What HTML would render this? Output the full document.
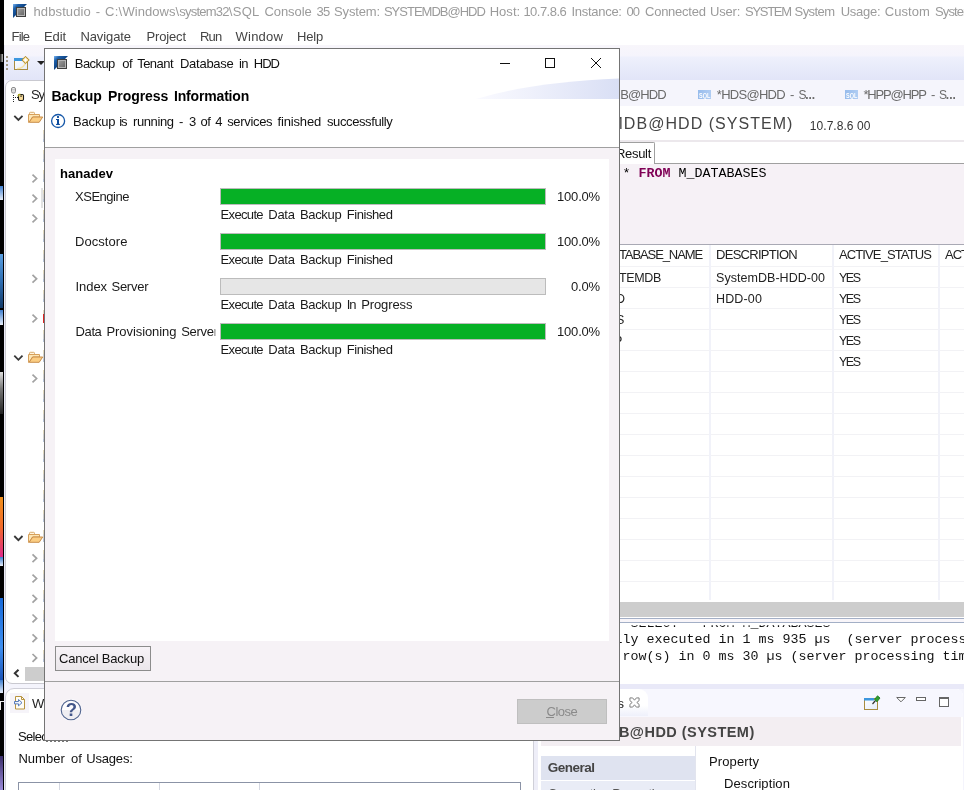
<!DOCTYPE html>
<html lang="en"><head><meta charset="utf-8"><title>hdbstudio</title>
<style>
html,body{margin:0;padding:0;}
body{width:964px;height:790px;position:relative;overflow:hidden;background:#fff;font-family:"Liberation Sans",sans-serif;}
.t{position:absolute;white-space:pre;}
.b{position:absolute;box-sizing:border-box;}
svg{position:absolute;overflow:visible;}
#root{position:absolute;left:0;top:0;width:964px;height:790px;overflow:hidden;will-change:transform;}

</style></head>
<body>
<div id="root">
<!-- ===== main window chrome ===== -->
<div class="b" style="left:0;top:0;width:964px;height:45px;background:#fff"></div>
<div class="b" style="left:0;top:45px;width:964px;height:35px;background:linear-gradient(#f8f6fb 0,#f5f4fc 11px,#eef0fc 12px,#e2e5f8 34px,#e2e5f8 35px)"></div>
<div class="b" style="left:0;top:80px;width:964px;height:710px;background:#f4f4fc"></div>

<!-- app icon -->
<svg style="left:13px;top:4px" width="14" height="14" viewBox="0 0 14 14"><defs><linearGradient id="ig" x1="0" y1="0" x2="0.6" y2="0.6"><stop offset="0" stop-color="#7db6f2"/><stop offset="0.35" stop-color="#1d5fa8"/><stop offset="1" stop-color="#083a78"/></linearGradient><linearGradient id="sg" x1="0" y1="0" x2="1" y2="1"><stop offset="0" stop-color="#9a9a9a"/><stop offset="1" stop-color="#6a6a6a"/></linearGradient></defs><polygon points="0,0 14,0 0,14" fill="url(#ig)"/><rect x="3" y="3" width="10" height="10" fill="#3e3e3e"/><rect x="4" y="4" width="8" height="8" fill="#b4b4b4"/><rect x="5" y="5" width="6" height="6" fill="url(#sg)"/></svg>

<!-- toolbar bits -->
<div class="b" style="left:6px;top:56px;width:2px;height:16px;background:repeating-linear-gradient(#a39a86 0,#a39a86 2px,transparent 2px,transparent 4px)"></div>
<svg style="left:14px;top:56px" width="16" height="15" viewBox="0 0 16 15"><defs><linearGradient id="nw" x1="0" y1="0" x2="1" y2="1"><stop offset="0" stop-color="#fff"/><stop offset="1" stop-color="#e4ecfc"/></linearGradient></defs><rect x="0.500" y="2.500" width="13" height="11" fill="url(#nw)" stroke="#a88c40"/><rect x="0" y="2" width="9" height="3" fill="#3d97de"/><path d="M3 12.700 Q9.500 12.500 11.300 7" stroke="#f6e2a4" stroke-width="1.300" fill="none"/><path d="M11.500 0.300 L15.200 4 L11.500 7.700 L7.800 4 Z" fill="#f1d68a" stroke="#b08a2c" stroke-width="1"/><path d="M11.500 2.200v3.600M9.700 4h3.600" stroke="#fff" stroke-width="1.300"/></svg>
<svg style="left:37px;top:61px" width="8" height="4" viewBox="0 0 8 4"><polygon points="0,0 8,0 4,4" fill="#222"/></svg>

<!-- ===== left Systems panel ===== -->
<div class="b" style="left:5px;top:80px;width:60px;height:604px;background:#fff;border:1px solid #c9c9d0;border-radius:7px 0 0 7px"></div>
<!-- systems icon -->
<svg style="left:10px;top:87px" width="15" height="15" viewBox="0 0 15 15"><rect x="1.500" y="0.500" width="4" height="5.500" rx="1.500" fill="#f0f0f0" stroke="#8a8a8a"/><path d="M2 2.500h3M2 4h3" stroke="#b5b5b5" stroke-width="0.700"/><path d="M3.500 8v7" stroke="#222" stroke-width="1" stroke-dasharray="1 1" fill="none"/><path d="M5 10.500h3" stroke="#222" stroke-width="1" stroke-dasharray="1 1" fill="none"/><rect x="8.500" y="7.500" width="5" height="6" rx="1.200" fill="#f9dc9a" stroke="#1a1a1a" stroke-width="1.100"/><path d="M8.300 9.500v-1.200q0-1 1.200-1h1" stroke="#a6a418" stroke-width="1.200" fill="none"/><rect x="10.300" y="8.500" width="1.500" height="1.200" fill="#1a1a1a"/></svg>
<!-- chevrons + folders -->
<svg style="left:0;top:0" width="50" height="700" viewBox="0 0 50 700" fill="none">
 <g stroke="#383838" stroke-width="1.800">
  <path d="M14.300 115.800 L18.400 120 L22.500 115.800"/><path d="M14.300 355.600 L18.400 359.800 L22.500 355.600"/><path d="M14.300 536 L18.400 540.200 L22.500 536"/>
 </g>
 <g stroke="#a2a2a2" stroke-width="1.700">
  <path d="M32.500 174.6 L36.600 178.5 L32.500 182.4"/><path d="M32.500 194.7 L36.600 198.6 L32.500 202.5"/><path d="M32.500 214.6 L36.600 218.5 L32.500 222.4"/><path d="M32.500 274.9 L36.600 278.8 L32.500 282.7"/><path d="M32.500 314.6 L36.600 318.5 L32.500 322.4"/><path d="M32.500 374.6 L36.600 378.5 L32.500 382.4"/><path d="M32.500 554.4 L36.600 558.3 L32.500 562.2"/><path d="M32.500 574.6 L36.600 578.5 L32.500 582.4"/><path d="M32.500 594.8 L36.600 598.7 L32.500 602.6"/><path d="M32.500 614.5 L36.600 618.4 L32.500 622.3"/><path d="M32.500 634.3 L36.600 638.2 L32.500 642.1"/><path d="M32.500 654.0 L36.600 657.9 L32.500 661.8"/>
 </g>
 <g id="fold">
  <path d="M29.500 114.500 v-1.300 q0 -0.900 0.900 -0.900 h3.200 q0.900 0 0.900 0.900 v1.300" fill="#fff6e2" stroke="#d9ab6c"/>
  <path d="M28.500 114.500 h11 v2.500 h-7 l-3.500 5.300 h-0.500z" fill="#fde6b6" stroke="#d6a05c"/>
  <path d="M29.200 122.300 l3.500 -5.300 h10 l-3.500 5.300z" fill="#fbcd82" stroke="#c98e4a"/>
 </g>
 <use href="#fold" y="240"/><use href="#fold" y="420"/>
 <path d="M18.500 669.700 L14.800 673.300 L18.500 676.900" stroke="#333" stroke-width="2"/>
</svg>
<div class="b" style="left:25px;top:667px;width:30px;height:14px;background:#cdcdcd"></div>
<!-- hidden icon slivers next to dialog -->
<div class="b" style="left:43px;top:130px;width:1px;height:532px;opacity:.55;background:repeating-linear-gradient(#cdbd8c 0,#c4b68e 4px,#a9a9a9 4px,#a9a9a9 9px,#8094b8 9px,#8094b8 12px,transparent 12px,transparent 20px)"></div>
<div class="b" style="left:41px;top:188px;width:2px;height:20px;background:#e2e2e2"></div>
<div class="b" style="left:43px;top:314px;width:1px;height:9px;background:#d22"></div>

<!-- ===== bottom-left panel ===== -->
<div class="b" style="left:5px;top:688px;width:529px;height:110px;background:#fff;border:1px solid #cfcfd8;border-radius:9px 0 0 0"></div>
<div class="b" style="left:10px;top:693px;width:19px;height:20px;background:#f6f4f9"></div>
<svg style="left:14px;top:696px" width="12" height="14" viewBox="0 0 12 14"><path d="M1.500 0.500h6l3 3v9.500h-9z" fill="#fffdf6" stroke="#b89440"/><path d="M7.500 0.500v3h3" fill="none" stroke="#b89440"/><path d="M0.500 5.500h4v-2l3.500 3.200-3.500 3.200v-2h-4z" fill="#eef3fc" stroke="#4a6fb5" stroke-width="0.900"/></svg>
<div class="b" style="left:18px;top:782px;width:503px;height:20px;border:1px solid #8b93a6;background:#fff"></div>
<div class="b" style="left:59px;top:783px;width:1px;height:10px;background:#d5d8e2"></div>
<div class="b" style="left:159px;top:783px;width:1px;height:10px;background:#d5d8e2"></div>
<div class="b" style="left:259px;top:783px;width:1px;height:10px;background:#d5d8e2"></div>

<div class="b" style="left:46px;top:741px;width:24px;height:1px;background:repeating-linear-gradient(90deg,#777 0,#777 2px,transparent 2px,transparent 4px)"></div>

<!-- left black desktop strip -->
<div class="b" style="left:4px;top:45px;width:1px;height:745px;background:#ebebf8"></div>
<div class="b" style="left:0;top:0;width:4px;height:790px;background:#000"></div>
<div class="b" style="left:0;top:54px;width:3px;height:8px;background:linear-gradient(90deg,#111,#bbb)"></div>
<div class="b" style="left:0;top:186px;width:3px;height:14px;background:linear-gradient(#3f7fd0,#e8eef8)"></div>
<div class="b" style="left:0;top:254px;width:3px;height:54px;background:linear-gradient(#5a9ee0,#2f6fb4 50%,#123a68)"></div>
<div class="b" style="left:0;top:310px;width:3px;height:15px;background:linear-gradient(#3f7fd0,#e8eef8)"></div>
<div class="b" style="left:0;top:372px;width:3px;height:42px;background:linear-gradient(#ddd,#777 40%,#222)"></div>
<div class="b" style="left:0;top:497px;width:3px;height:60px;background:linear-gradient(#f0901c,#f26a2a 50%,#e02a8a)"></div>
<div class="b" style="left:0;top:557px;width:3px;height:9px;background:linear-gradient(#3f7fd0,#e8eef8)"></div>
<div class="b" style="left:0;top:598px;width:3px;height:82px;background:linear-gradient(#1668d8,#3f8ff0 60%,#1b54b8)"></div>
<div class="b" style="left:0;top:680px;width:3px;height:13px;background:linear-gradient(#3f7fd0,#e8eef8)"></div>
<div class="b" style="left:0;top:701px;width:4px;height:9px;border-left:1px solid #eee;border-top:1px solid #eee"></div>
<div class="b" style="left:0;top:756px;width:3px;height:34px;background:linear-gradient(#3a2d6a,#9a8ad8)"></div>

<!-- ===== editor area (right) ===== -->
<div class="b" style="left:600px;top:80px;width:364px;height:26px;background:#f5f5fc"></div>
<div class="b" style="left:600px;top:106px;width:364px;height:57px;background:#fff"></div>
<div class="b" style="left:600px;top:140px;width:364px;height:2px;background:#ece8ec"></div>
<!-- sql icons -->
<div class="b" style="left:698px;top:90px;width:13px;height:9px;background:linear-gradient(90deg,#97bcec,#b0cdf3)"></div>
<div class="b" style="left:845px;top:90px;width:13px;height:9px;background:linear-gradient(90deg,#97bcec,#b0cdf3)"></div>
<!-- Result tab -->
<div class="b" style="left:600px;top:163px;width:364px;height:81px;background:#f6f1f6;border-top:1px solid #a0a0a0"></div>
<div class="b" style="left:600px;top:142px;width:55px;height:22px;background:#fff;border:1px solid #a0a0a0;border-bottom:none;border-radius:0 2px 0 0"></div>
<!-- result table -->
<div class="b" style="left:600px;top:244px;width:364px;height:358px;background:#fff;border-top:1px solid #a9a9b4"></div>
<div class="b" style="left:600px;top:246px;width:364px;height:356px;background:repeating-linear-gradient(#fff 0,#fff 20px,#f2f2f5 20px,#f2f2f5 21px)"></div>
<div class="b" style="left:600px;top:245px;width:364px;height:21px;background:#fff"></div>
<div class="b" style="left:709px;top:245px;width:2px;height:355px;background:#f1f2f9"></div>
<div class="b" style="left:832px;top:245px;width:2px;height:355px;background:#f1f2f9"></div>
<div class="b" style="left:938px;top:245px;width:2px;height:355px;background:#f1f2f9"></div>
<div class="b" style="left:600px;top:602px;width:364px;height:15px;background:#cdcdcd"></div>
<div class="b" style="left:600px;top:617px;width:364px;height:6px;background:linear-gradient(#fff 0,#fff 1px,#a3afc6 1px,#a3afc6 2px,#f8f5f9 2px,#f8f5f9 5px,#a3afc6 5px,#a3afc6 6px)"></div>
<!-- console -->
<div class="b" style="left:600px;top:623px;width:364px;height:61px;background:#fff"></div>
<div class="b" style="left:534px;top:684px;width:430px;height:5px;background:#e9e9f8"></div>

<!-- ===== properties panel ===== -->
<div class="b" style="left:534px;top:684px;width:4px;height:106px;background:#eeeef8"></div>
<div class="b" style="left:538px;top:689px;width:425px;height:101px;background:#fff;border-radius:0 7px 0 0"></div>
<div class="b" style="left:538px;top:689px;width:425px;height:28px;background:#f7f7fe;border-radius:0 7px 0 0"></div>
<div class="b" style="left:538px;top:689px;width:110px;height:27px;background:linear-gradient(#fff,#fff 60%,#eef0fb);border-radius:0 9px 0 0"></div>
<div class="b" style="left:541px;top:717px;width:420px;height:29px;background:#f3eef2"></div>
<div class="b" style="left:541px;top:756px;width:154px;height:24px;background:#dfe3f0"></div>
<div class="b" style="left:541px;top:781px;width:154px;height:12px;background:#e9ecf6"></div>
<div class="b" style="left:695px;top:746px;width:1px;height:44px;background:#e2e4ee"></div>
<!-- properties toolbar icons -->
<svg style="left:864px;top:695px" width="17" height="16" viewBox="0 0 17 16"><rect x="0.500" y="3.500" width="13" height="11" fill="url(#nw)" stroke="#a88c40"/><rect x="0" y="3" width="10" height="2.500" fill="#3d97de"/><path d="M8.500 9 L11.500 5.500" stroke="#333" stroke-width="1.200"/><path d="M10.500 4.500 L13.500 0.800 L16 3 L13 6.800z" fill="#2fa02f" stroke="#1b741b" stroke-width="0.800"/></svg>
<svg style="left:896px;top:697px" width="10" height="6" viewBox="0 0 10 6"><path d="M0.700 0.500h8.600l-4.300 4.300z" fill="#fff" stroke="#666" stroke-width="1"/></svg>
<div class="b" style="left:916px;top:697px;width:10px;height:4px;border:1px solid #666;background:#fff"></div>
<div class="b" style="left:939px;top:697px;width:10px;height:10px;border:1px solid #666;border-top-width:2px;background:#fff"></div>
<svg style="left:629px;top:697px" width="11" height="11" viewBox="0 0 12 12"><path d="M1 1h3l2 2.500 2-2.500h3v3l-2.500 2 2.500 2v3h-3l-2-2.500-2 2.500h-3v-3l2.500-2-2.500-2z" fill="#fff" stroke="#777" stroke-width="1"/></svg>

<span class="t" style="left:33.5px;top:3.00px;font-size:13px;line-height:17px;color:#9b9b9b;letter-spacing:0.112px;">hdbstudio</span>
<span class="t" style="left:95.7px;top:3.00px;font-size:13px;line-height:17px;color:#9b9b9b;letter-spacing:0.156px;">-</span>
<span class="t" style="left:105.1px;top:3.00px;font-size:13px;line-height:17px;color:#9b9b9b;letter-spacing:0.225px;">C:\</span>
<span class="t" style="left:122.4px;top:3.00px;font-size:13px;line-height:17px;color:#9b9b9b;letter-spacing:0.068px;">Windows\</span>
<span class="t" style="left:179.3px;top:3.00px;font-size:13px;line-height:17px;color:#9b9b9b;letter-spacing:-0.768px;">system32</span>
<span class="t" style="left:228.8px;top:3.00px;font-size:13px;line-height:17px;color:#9b9b9b;letter-spacing:0.294px;">\SQL</span>
<span class="t" style="left:264.4px;top:3.00px;font-size:13px;line-height:17px;color:#9b9b9b;letter-spacing:-0.058px;">Console</span>
<span class="t" style="left:316.6px;top:3.00px;font-size:13px;line-height:17px;color:#9b9b9b;letter-spacing:-0.934px;">35</span>
<span class="t" style="left:334.1px;top:3.00px;font-size:13px;line-height:17px;color:#9b9b9b;letter-spacing:-0.153px;">System:</span>
<span class="t" style="left:383.9px;top:3.00px;font-size:13px;line-height:17px;color:#9b9b9b;letter-spacing:-0.990px;">SYSTEMDB@HDD</span>
<span class="t" style="left:489.7px;top:3.00px;font-size:13px;line-height:17px;color:#9b9b9b;letter-spacing:0.031px;">Host:</span>
<span class="t" style="left:523.4px;top:3.00px;font-size:13px;line-height:17px;color:#9b9b9b;letter-spacing:-0.525px;">10.7.8.6</span>
<span class="t" style="left:571.4px;top:3.00px;font-size:13px;line-height:17px;color:#9b9b9b;letter-spacing:-0.274px;">Instance:</span>
<span class="t" style="left:626.6px;top:3.00px;font-size:13px;line-height:17px;color:#9b9b9b;letter-spacing:-1.034px;">00</span>
<span class="t" style="left:645px;top:3.00px;font-size:13px;line-height:17px;color:#9b9b9b;letter-spacing:-0.243px;">Connected</span>
<span class="t" style="left:710px;top:3.00px;font-size:13px;line-height:17px;color:#9b9b9b;letter-spacing:-0.172px;">User:</span>
<span class="t" style="left:745px;top:3.00px;font-size:13px;line-height:17px;color:#9b9b9b;letter-spacing:-1.278px;">SYSTEM</span>
<span class="t" style="left:794.6px;top:3.00px;font-size:13px;line-height:17px;color:#9b9b9b;letter-spacing:-0.574px;">System</span>
<span class="t" style="left:840.7px;top:3.00px;font-size:13px;line-height:17px;color:#9b9b9b;letter-spacing:-0.234px;">Usage:</span>
<span class="t" style="left:884.7px;top:3.00px;font-size:13px;line-height:17px;color:#9b9b9b;letter-spacing:0.084px;">Custom</span>
<span class="t" style="left:935px;top:3.00px;font-size:13px;line-height:17px;color:#9b9b9b;letter-spacing:-0.891px;">System</span>
<span class="t" style="left:11.5px;top:28.00px;font-size:13px;line-height:17px;color:#444;letter-spacing:-0.788px;">File</span>
<span class="t" style="left:44px;top:28.00px;font-size:13px;line-height:17px;color:#444;letter-spacing:-0.102px;">Edit</span>
<span class="t" style="left:80.4px;top:28.00px;font-size:13px;line-height:17px;color:#444;letter-spacing:-0.089px;">Navigate</span>
<span class="t" style="left:146.4px;top:28.00px;font-size:13px;line-height:17px;color:#444;letter-spacing:-0.124px;">Project</span>
<span class="t" style="left:200px;top:28.00px;font-size:13px;line-height:17px;color:#444;letter-spacing:-0.786px;">Run</span>
<span class="t" style="left:235.6px;top:28.00px;font-size:13px;line-height:17px;color:#444;letter-spacing:0.192px;">Window</span>
<span class="t" style="left:297px;top:28.00px;font-size:13px;line-height:17px;color:#444;letter-spacing:-0.188px;">Help</span>
<span class="t" style="left:31px;top:86.00px;font-size:13px;line-height:17px;color:#222;letter-spacing:-1.086px;">Sy</span>
<span class="t" style="left:32px;top:695.00px;font-size:13px;line-height:17px;color:#222;letter-spacing:-0.281px;">W</span>
<span class="t" style="left:18px;top:728.00px;font-size:13px;line-height:17px;color:#111;letter-spacing:-0.689px;">Selected:</span>
<span class="t" style="left:18.4px;top:750.00px;font-size:13px;line-height:17px;color:#111;letter-spacing:0.025px;">Number</span>
<span class="t" style="left:71px;top:750.00px;font-size:13px;line-height:17px;color:#111;letter-spacing:0.028px;">of</span>
<span class="t" style="left:86.3px;top:750.00px;font-size:13px;line-height:17px;color:#111;letter-spacing:-0.200px;">Usages:</span>
<span class="t" style="left:620.2px;top:86.00px;font-size:13px;line-height:17px;color:#6a6a6a;letter-spacing:-0.889px;">B@HDD</span>
<span class="t" style="left:699.3px;top:89.57px;font-size:7px;line-height:11px;color:#fff;font-weight:bold;transform:scaleX(0.78);transform-origin:0 50%;">SQL</span>
<span class="t" style="left:716.8px;top:86.00px;font-size:13px;line-height:17px;color:#6a6a6a;letter-spacing:-0.722px;">*HDS@HDD</span>
<span class="t" style="left:790px;top:86.00px;font-size:13px;line-height:17px;color:#6a6a6a;letter-spacing:0.156px;">-</span>
<span class="t" style="left:798.4px;top:86.84px;font-size:12px;line-height:16px;color:#6a6a6a;">S</span>
<span class="t" style="left:805.2px;top:86.84px;font-size:12px;line-height:16px;color:#6a6a6a;font-weight:bold;">...</span>
<span class="t" style="left:846.3px;top:89.57px;font-size:7px;line-height:11px;color:#fff;font-weight:bold;transform:scaleX(0.78);transform-origin:0 50%;">SQL</span>
<span class="t" style="left:863.5px;top:86.00px;font-size:13px;line-height:17px;color:#6a6a6a;letter-spacing:-1.190px;">*HPP@HPP</span>
<span class="t" style="left:931px;top:86.00px;font-size:13px;line-height:17px;color:#6a6a6a;letter-spacing:0.156px;">-</span>
<span class="t" style="left:939px;top:86.84px;font-size:12px;line-height:16px;color:#6a6a6a;">S</span>
<span class="t" style="left:945.8px;top:86.84px;font-size:12px;line-height:16px;color:#6a6a6a;font-weight:bold;">...</span>
<span class="t" style="left:609.5px;top:114.46px;font-size:16px;line-height:20px;color:#444;letter-spacing:1.040px;">MDB@HDD (SYSTEM)</span>
<span class="t" style="left:809.8px;top:117.84px;font-size:12px;line-height:16px;color:#333;letter-spacing:0.049px;">10.7.8.6 00</span>
<span class="t" style="left:616px;top:145.00px;font-size:13px;line-height:17px;color:#111;letter-spacing:-0.310px;">Result</span>
<span class="t" style="left:622.5px;top:164.78px;font-size:13.33px;line-height:17.33px;color:#000;font-family:'Liberation Mono', monospace;letter-spacing:0.001px;">* <b style="color:#7f0055">FROM</b> M_DATABASES</span>
<span class="t" style="left:619px;top:246.00px;font-size:13px;line-height:17px;color:#222;letter-spacing:-1.102px;">TABASE_NAME</span>
<span class="t" style="left:716px;top:246.00px;font-size:13px;line-height:17px;color:#222;letter-spacing:-0.713px;">DESCRIPTION</span>
<span class="t" style="left:839px;top:246.00px;font-size:13px;line-height:17px;color:#222;letter-spacing:-0.888px;">ACTIVE_STATUS</span>
<span class="t" style="left:945px;top:246.00px;font-size:13px;line-height:17px;color:#222;letter-spacing:-1.000px;">ACT</span>
<span class="t" style="left:619px;top:270.42px;font-size:12.5px;line-height:16.5px;color:#222;letter-spacing:-0.350px;">TEMDB</span>
<span class="t" style="left:716px;top:270.42px;font-size:12.5px;line-height:16.5px;color:#222;letter-spacing:0.043px;">SystemDB-HDD-00</span>
<span class="t" style="left:839px;top:270.42px;font-size:12.5px;line-height:16.5px;color:#222;letter-spacing:-1.472px;">YES</span>
<span class="t" style="left:616px;top:291.42px;font-size:12.5px;line-height:16.5px;color:#222;letter-spacing:-1.031px;">D</span>
<span class="t" style="left:716px;top:291.42px;font-size:12.5px;line-height:16.5px;color:#222;letter-spacing:0.141px;">HDD-00</span>
<span class="t" style="left:839px;top:291.42px;font-size:12.5px;line-height:16.5px;color:#222;letter-spacing:-1.472px;">YES</span>
<span class="t" style="left:616px;top:312.42px;font-size:12.5px;line-height:16.5px;color:#222;letter-spacing:-1.344px;">S</span>
<span class="t" style="left:839px;top:312.42px;font-size:12.5px;line-height:16.5px;color:#222;letter-spacing:-1.472px;">YES</span>
<span class="t" style="left:614px;top:333.42px;font-size:12.5px;line-height:16.5px;color:#222;letter-spacing:-0.344px;">P</span>
<span class="t" style="left:839px;top:333.42px;font-size:12.5px;line-height:16.5px;color:#222;letter-spacing:-1.472px;">YES</span>
<span class="t" style="left:839px;top:354.42px;font-size:12.5px;line-height:16.5px;color:#222;letter-spacing:-1.472px;">YES</span>
<span class="t" style="left:614.5px;top:630.78px;font-size:13.33px;line-height:17.33px;color:#111;font-family:'Liberation Mono', monospace;letter-spacing:0.002px;">lly executed in 1 ms 935 µs  (server processi</span>
<span class="t" style="left:622.5px;top:647.78px;font-size:13.33px;line-height:17.33px;color:#111;font-family:'Liberation Mono', monospace;letter-spacing:0.002px;">row(s) in 0 ms 30 µs (server processing time</span>
<span class="t" style="left:622.5px;top:614.78px;font-size:13.33px;line-height:17.33px;color:#111;font-family:'Liberation Mono', monospace;letter-spacing:0.002px;clip-path:inset(10.5px 0 0 0);">&#x27;SELECT * FROM M_DATABASES&#x27;</span>
<span class="t" style="left:617.5px;top:695.00px;font-size:13px;line-height:17px;color:#222;letter-spacing:-1.500px;">s</span>
<span class="t" style="left:608px;top:722.73px;font-size:14.5px;line-height:18.5px;color:#444;font-weight:bold;letter-spacing:0.459px;">DB@HDD (SYSTEM)</span>
<span class="t" style="left:547.7px;top:758.57px;font-size:13.5px;line-height:17.5px;color:#444;font-weight:bold;letter-spacing:-0.497px;">General</span>
<span class="t" style="left:547.7px;top:785.00px;font-size:13px;line-height:17px;color:#555;letter-spacing:-0.445px;">Connection Properties</span>
<span class="t" style="left:709px;top:753.00px;font-size:13px;line-height:17px;color:#111;letter-spacing:0.107px;">Property</span>
<span class="t" style="left:724px;top:775.00px;font-size:13px;line-height:17px;color:#111;letter-spacing:0.088px;">Description</span>
<!-- ===== DIALOG ===== -->
<div class="b" style="left:44px;top:48px;width:576px;height:693px;background:#f6f2f6;border:1px solid #747474"></div>
<div class="b" style="left:45px;top:49px;width:574px;height:98px;background:#fff"></div>
<div class="b" style="left:45px;top:147px;width:574px;height:1px;background:#a0a0a0"></div>
<!-- banner swoosh -->
<svg style="left:476px;top:78px" width="143" height="21" viewBox="0 0 143 21"><defs><linearGradient id="sw" x1="0" x2="1"><stop offset="0" stop-color="#fafaff"/><stop offset="0.400" stop-color="#eef0fb"/><stop offset="1" stop-color="#d9dff5"/></linearGradient></defs><path d="M0 21 Q56 4 143 0.500 V21z" fill="url(#sw)"/></svg>
<!-- dialog icon -->
<svg style="left:54px;top:56px" width="14" height="14" viewBox="0 0 14 14"><polygon points="0,0 14,0 0,14" fill="url(#ig)"/><rect x="3" y="3" width="10" height="10" fill="#3e3e3e"/><rect x="4" y="4" width="8" height="8" fill="#b4b4b4"/><rect x="5" y="5" width="6" height="6" fill="url(#sg)"/></svg>
<!-- window buttons -->
<svg style="left:490px;top:50px" width="125" height="26" viewBox="0 0 125 26" fill="none" stroke="#111" stroke-width="1"><path d="M10 13.500h10"/><rect x="55.500" y="8.500" width="9" height="9"/><path d="M101 8l10 10M111 8l-10 10"/></svg>
<!-- info icon -->
<svg style="left:50px;top:113px" width="16" height="16" viewBox="0 0 16 16"><circle cx="8.100" cy="8" r="6.500" fill="#fff" stroke="#1557a8" stroke-width="1.300"/><rect x="7" y="3.100" width="2" height="1.800" fill="#0a4a9c"/><rect x="7" y="6" width="2" height="5.800" fill="#0a4a9c"/><rect x="6" y="6" width="1" height="1" fill="#0a4a9c"/><rect x="6" y="10.900" width="4" height="1" fill="#0a4a9c"/></svg>
<!-- white content panel -->
<div class="b" style="left:55px;top:159px;width:554px;height:482px;background:#fff"></div>
<!-- progress bars -->
<div class="b" style="left:220px;top:188px;width:326px;height:17px;background:#06b025;border:1px solid #bcbcbc"></div>
<div class="b" style="left:220px;top:233px;width:326px;height:17px;background:#06b025;border:1px solid #bcbcbc"></div>
<div class="b" style="left:220px;top:278px;width:326px;height:17px;background:#e6e6e6;border:1px solid #bcbcbc"></div>
<div class="b" style="left:220px;top:323px;width:326px;height:17px;background:#06b025;border:1px solid #bcbcbc"></div>
<!-- buttons -->
<div class="b" style="left:55px;top:646px;width:96px;height:25px;background:linear-gradient(#f7f3f7,#ebe7eb);border:1px solid #8c8c8c"></div>
<div class="b" style="left:45px;top:681px;width:574px;height:1px;background:#a0a0a0"></div>
<div class="b" style="left:517px;top:699px;width:90px;height:25px;background:#cccccc;border:1px solid #bfbfbf"></div>
<div class="b" style="left:546px;top:717px;width:8px;height:1px;background:#8a8a8a"></div>
<!-- help icon -->
<svg style="left:59px;top:698px" width="24" height="24" viewBox="0 0 24 24"><defs><linearGradient id="hg" x1="0" y1="0" x2="0" y2="1"><stop offset="0.500" stop-color="#fdfcfe"/><stop offset="0.520" stop-color="#efeef2"/></linearGradient></defs><circle cx="12" cy="12" r="11" fill="#fbf9fc"/><circle cx="12" cy="12" r="9.800" fill="url(#hg)" stroke="#4f638e" stroke-width="1.100"/></svg>

<span class="t" style="left:74.8px;top:55.00px;font-size:13px;line-height:17px;color:#111;letter-spacing:-0.579px;">Backup</span>
<span class="t" style="left:122.3px;top:55.00px;font-size:13px;line-height:17px;color:#111;letter-spacing:-0.622px;">of</span>
<span class="t" style="left:137.2px;top:55.00px;font-size:13px;line-height:17px;color:#111;letter-spacing:-0.524px;">Tenant</span>
<span class="t" style="left:180px;top:55.00px;font-size:13px;line-height:17px;color:#111;letter-spacing:-0.270px;">Database</span>
<span class="t" style="left:239px;top:55.00px;font-size:13px;line-height:17px;color:#111;letter-spacing:-0.662px;">in</span>
<span class="t" style="left:253.8px;top:55.00px;font-size:13px;line-height:17px;color:#111;letter-spacing:-1.024px;">HDD</span>
<span class="t" style="left:51.5px;top:87.15px;font-size:14px;line-height:18px;color:#000;font-weight:bold;letter-spacing:-0.046px;">Backup</span>
<span class="t" style="left:108.1px;top:87.15px;font-size:14px;line-height:18px;color:#000;font-weight:bold;letter-spacing:-0.075px;">Progress</span>
<span class="t" style="left:174px;top:87.15px;font-size:14px;line-height:18px;color:#000;font-weight:bold;letter-spacing:-0.173px;">Information</span>
<span class="t" style="left:73px;top:113.00px;font-size:13px;line-height:17px;color:#111;letter-spacing:-0.162px;">Backup</span>
<span class="t" style="left:119.3px;top:113.00px;font-size:13px;line-height:17px;color:#111;letter-spacing:-1.195px;">is</span>
<span class="t" style="left:133px;top:113.00px;font-size:13px;line-height:17px;color:#111;letter-spacing:-0.396px;">running</span>
<span class="t" style="left:178.9px;top:113.00px;font-size:13px;line-height:17px;color:#111;letter-spacing:-0.244px;">-</span>
<span class="t" style="left:189px;top:113.00px;font-size:13px;line-height:17px;color:#111;letter-spacing:-1.534px;">3</span>
<span class="t" style="left:200.4px;top:113.00px;font-size:13px;line-height:17px;color:#111;letter-spacing:-0.322px;">of</span>
<span class="t" style="left:215.2px;top:113.00px;font-size:13px;line-height:17px;color:#111;letter-spacing:-0.934px;">4</span>
<span class="t" style="left:227.2px;top:113.00px;font-size:13px;line-height:17px;color:#111;letter-spacing:-0.323px;">services</span>
<span class="t" style="left:277.6px;top:113.00px;font-size:13px;line-height:17px;color:#111;letter-spacing:-0.177px;">finished</span>
<span class="t" style="left:327px;top:113.00px;font-size:13px;line-height:17px;color:#111;letter-spacing:-0.398px;">successfully</span>
<span class="t" style="left:60px;top:165.00px;font-size:13px;line-height:17px;color:#000;font-weight:bold;letter-spacing:0.036px;">hanadev</span>
<span class="t" style="left:75px;top:188.00px;font-size:13px;line-height:17px;color:#1a1a1a;letter-spacing:-0.479px;">XSEngine</span>
<span class="t" style="left:557px;top:188.00px;font-size:13px;line-height:17px;color:#1a1a1a;letter-spacing:-0.182px;">100.0%</span>
<span class="t" style="left:220.6px;top:206.00px;font-size:13px;line-height:17px;color:#1a1a1a;letter-spacing:-0.669px;">Execute</span>
<span class="t" style="left:268.3px;top:206.00px;font-size:13px;line-height:17px;color:#1a1a1a;letter-spacing:-0.292px;">Data</span>
<span class="t" style="left:300px;top:206.00px;font-size:13px;line-height:17px;color:#1a1a1a;letter-spacing:-0.346px;">Backup</span>
<span class="t" style="left:346.7px;top:206.00px;font-size:13px;line-height:17px;color:#1a1a1a;letter-spacing:-0.418px;">Finished</span>
<span class="t" style="left:75px;top:233.00px;font-size:13px;line-height:17px;color:#1a1a1a;letter-spacing:0.059px;">Docstore</span>
<span class="t" style="left:557px;top:233.00px;font-size:13px;line-height:17px;color:#1a1a1a;letter-spacing:-0.182px;">100.0%</span>
<span class="t" style="left:220.6px;top:251.00px;font-size:13px;line-height:17px;color:#1a1a1a;letter-spacing:-0.669px;">Execute</span>
<span class="t" style="left:268.3px;top:251.00px;font-size:13px;line-height:17px;color:#1a1a1a;letter-spacing:-0.292px;">Data</span>
<span class="t" style="left:300px;top:251.00px;font-size:13px;line-height:17px;color:#1a1a1a;letter-spacing:-0.346px;">Backup</span>
<span class="t" style="left:346.7px;top:251.00px;font-size:13px;line-height:17px;color:#1a1a1a;letter-spacing:-0.418px;">Finished</span>
<span class="t" style="left:75.6px;top:278.00px;font-size:13px;line-height:17px;color:#1a1a1a;letter-spacing:-0.082px;">Index</span>
<span class="t" style="left:111.5px;top:278.00px;font-size:13px;line-height:17px;color:#1a1a1a;letter-spacing:-0.266px;">Server</span>
<span class="t" style="left:571px;top:278.00px;font-size:13px;line-height:17px;color:#1a1a1a;letter-spacing:-0.160px;">0.0%</span>
<span class="t" style="left:220.6px;top:296.00px;font-size:13px;line-height:17px;color:#1a1a1a;letter-spacing:-0.669px;">Execute</span>
<span class="t" style="left:268.3px;top:296.00px;font-size:13px;line-height:17px;color:#1a1a1a;letter-spacing:-0.292px;">Data</span>
<span class="t" style="left:300px;top:296.00px;font-size:13px;line-height:17px;color:#1a1a1a;letter-spacing:-0.346px;">Backup</span>
<span class="t" style="left:346.7px;top:296.00px;font-size:13px;line-height:17px;color:#1a1a1a;letter-spacing:-0.972px;">In</span>
<span class="t" style="left:361.2px;top:296.00px;font-size:13px;line-height:17px;color:#1a1a1a;letter-spacing:-0.116px;">Progress</span>
<span class="t" style="left:75.6px;top:323.00px;font-size:13px;line-height:17px;color:#1a1a1a;letter-spacing:-0.417px;">Data</span>
<span class="t" style="left:106.5px;top:323.00px;font-size:13px;line-height:17px;color:#1a1a1a;letter-spacing:-0.077px;">Provisioning</span>
<span class="t" style="left:181.2px;top:323.00px;font-size:13px;line-height:17px;color:#1a1a1a;letter-spacing:-0.266px;clip-path:inset(0 2.6px 0 0);">Server</span>
<span class="t" style="left:557px;top:323.00px;font-size:13px;line-height:17px;color:#1a1a1a;letter-spacing:-0.182px;">100.0%</span>
<span class="t" style="left:220.6px;top:341.00px;font-size:13px;line-height:17px;color:#1a1a1a;letter-spacing:-0.669px;">Execute</span>
<span class="t" style="left:268.3px;top:341.00px;font-size:13px;line-height:17px;color:#1a1a1a;letter-spacing:-0.292px;">Data</span>
<span class="t" style="left:300px;top:341.00px;font-size:13px;line-height:17px;color:#1a1a1a;letter-spacing:-0.346px;">Backup</span>
<span class="t" style="left:346.7px;top:341.00px;font-size:13px;line-height:17px;color:#1a1a1a;letter-spacing:-0.418px;">Finished</span>
<span class="t" style="left:59px;top:650.00px;font-size:13px;line-height:17px;color:#111;letter-spacing:-0.189px;">Cancel Backup</span>
<span class="t" style="left:546.5px;top:703.00px;font-size:13px;line-height:17px;color:#8a8a8a;letter-spacing:-0.510px;">Close</span>
<span class="t" style="left:65.8px;top:699.34px;font-size:18.5px;line-height:22.5px;color:#43578a;font-weight:bold;letter-spacing:-0.912px;">?</span>
</div>
</body></html>
